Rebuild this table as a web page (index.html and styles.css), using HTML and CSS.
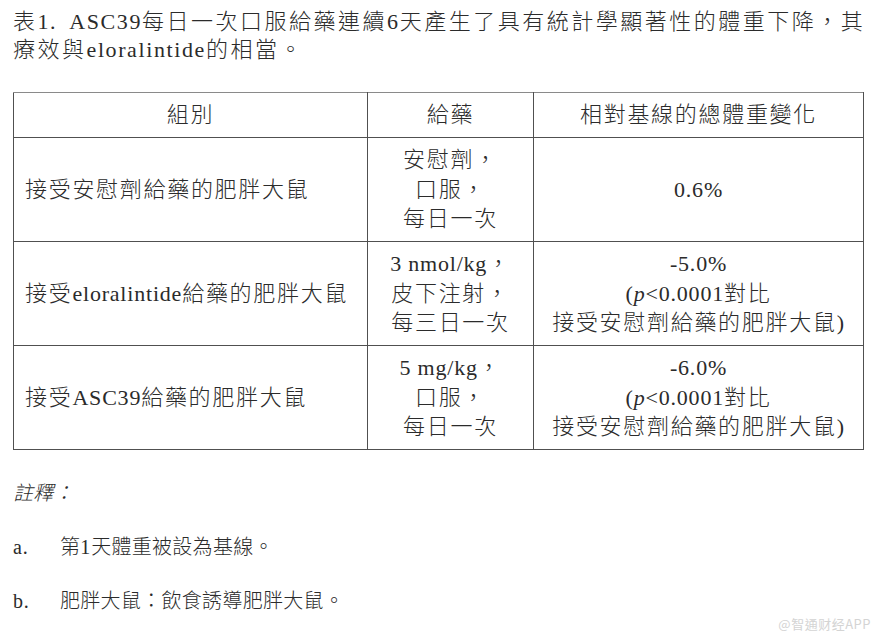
FILE: index.html
```html
<!DOCTYPE html>
<html lang="zh-Hant">
<head>
<meta charset="utf-8">
<title>表1</title>
<link rel="stylesheet" href="styles.css">
</head>
<body>
<div class="page">
  <div class="title">
    <div class="title-line">表<span class="en">1.</span><span class="en gap">ASC39</span>每日一次口服給藥連續<span class="en">6</span>天產生了具有統計學顯著性的體重下降，其</div>
    <div class="title-line">療效與<span class="en">eloralintide</span>的相當。</div>
  </div>

  <table class="data">
    <colgroup>
      <col class="c1">
      <col class="c2">
      <col class="c3">
    </colgroup>
    <thead>
      <tr>
        <th>組別</th>
        <th>給藥</th>
        <th>相對基線的總體重變化</th>
      </tr>
    </thead>
    <tbody>
      <tr>
        <td class="group">接受安慰劑給藥的肥胖大鼠</td>
        <td class="center">安慰劑，<br>口服，<br>每日一次</td>
        <td class="center"><span class="en">0.6%</span></td>
      </tr>
      <tr>
        <td class="group">接受<span class="en">eloralintide</span>給藥的肥胖大鼠</td>
        <td class="center"><span class="en">3 nmol/kg</span>，<br>皮下注射，<br>每三日一次</td>
        <td class="center"><span class="en">-5.0%</span><br><span class="en">(<i>p</i>&lt;0.0001</span>對比<br>接受安慰劑給藥的肥胖大鼠<span class="en">)</span></td>
      </tr>
      <tr>
        <td class="group">接受<span class="en">ASC39</span>給藥的肥胖大鼠</td>
        <td class="center"><span class="en">5 mg/kg</span>，<br>口服，<br>每日一次</td>
        <td class="center"><span class="en">-6.0%</span><br><span class="en">(<i>p</i>&lt;0.0001</span>對比<br>接受安慰劑給藥的肥胖大鼠<span class="en">)</span></td>
      </tr>
    </tbody>
  </table>

  <div class="notes">
    <div class="notes-head">註釋：</div>
    <div class="note"><span class="mark en">a.</span><span>第<span class="en">1</span>天體重被設為基線。</span></div>
    <div class="note"><span class="mark en">b.</span><span>肥胖大鼠：飲食誘導肥胖大鼠。</span></div>
  </div>

  <div class="watermark">@智通财经APP</div>
</div>
</body>
</html>
```

FILE: styles.css
```css
html, body {
  margin: 0;
  padding: 0;
  background: #ffffff;
}

body {
  font-family: "Liberation Serif", "Noto Sans CJK TC", serif;
  font-weight: 300;
  color: #2b2b2b;
}

.en {
  font-weight: 400;
  letter-spacing: 0.8px;
}

.page {
  position: relative;
  width: 880px;
  height: 642px;
  box-sizing: border-box;
  padding: 8px 17px 0 13px;
  overflow: hidden;
}

.title {
  font-size: 22px;
  line-height: 28px;
  letter-spacing: 2.5px;
}

.title .en {
  letter-spacing: 1.6px;
}

.title .gap {
  margin-left: 12px;
}

.title-line {
  white-space: nowrap;
}

.data {
  margin-top: 28px;
  width: 850px;
  border-collapse: collapse;
  table-layout: fixed;
  font-size: 22px;
  letter-spacing: 1.7px;
}

.data .c1 { width: 354px; }
.data .c2 { width: 166px; }
.data .c3 { width: 330px; }

.data th,
.data td {
  border: 1px solid #505050;
  padding: 0;
  line-height: 29.5px;
  vertical-align: middle;
}

.data thead tr th {
  border-top-color: #8a8a8a;
}

.data th {
  font-weight: 300;
  text-align: center;
  height: 44px;
}

.data td {
  height: 103px;
}

.data td.group {
  text-align: left;
  padding-left: 11px;
}

.data td.center {
  text-align: center;
}

.notes {
  margin-top: 29px;
  font-size: 20px;
  line-height: 28px;
  letter-spacing: 0.3px;
  display: flex;
  flex-direction: column;
  gap: 26px;
}

.notes-head {
  font-style: italic;
}

.note {
  display: grid;
  grid-template-columns: 47px 1fr;
}

.watermark {
  position: absolute;
  right: 9px;
  bottom: 9px;
  font-family: "Noto Sans CJK SC", "Noto Sans", sans-serif;
  font-weight: 400;
  font-size: 13px;
  color: #d4d4d4;
  letter-spacing: 0.5px;
}
```
